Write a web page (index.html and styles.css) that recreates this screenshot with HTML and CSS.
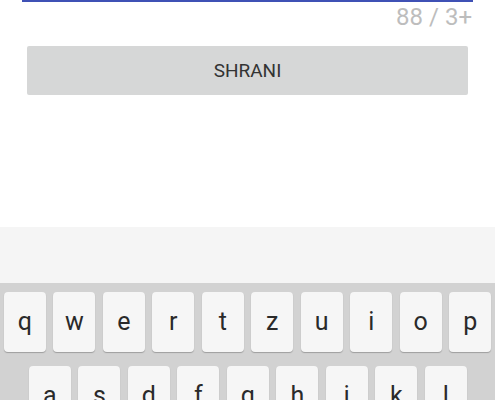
FILE: index.html
```html
<!DOCTYPE html>
<html>
<head>
<meta charset="utf-8">
<link rel="stylesheet" href="styles.css">
</head>
<body>
<div class="screen">
  <div class="underline"></div>
  <div class="counter">88 / 3+</div>
  <div class="btn">SHRANI</div>
  <div class="spacer"></div>
  <div class="suggest"></div>
  <div class="keyboard">
    <div class="row row1">
      <div class="key">q</div><div class="key">w</div><div class="key">e</div><div class="key">r</div><div class="key">t</div><div class="key">z</div><div class="key">u</div><div class="key">i</div><div class="key">o</div><div class="key">p</div>
    </div>
    <div class="row row2">
      <div class="key">a</div><div class="key">s</div><div class="key">d</div><div class="key">f</div><div class="key">g</div><div class="key">h</div><div class="key">j</div><div class="key">k</div><div class="key">l</div>
    </div>
  </div>
</div>
</body>
</html>
```

FILE: styles.css
```css
html, body {
  margin: 0;
  padding: 0;
  background: #ffffff;
}
.screen {
  width: 495px;
  height: 400px;
  overflow: hidden;
  display: flex;
  flex-direction: column;
  font-family: Roboto, "Liberation Sans", sans-serif;
}
.underline {
  height: 2px;
  margin: 0 22px;
  background: #3f51b5;
  flex: none;
}
.counter {
  flex: none;
  height: 44px;
  text-align: right;
  padding-right: 23px;
  font-size: 24px;
  line-height: 30px;
  color: #bdbdbd;
}
.btn {
  flex: none;
  margin: 0 27px;
  height: 49px;
  background: #d6d7d7;
  border-radius: 2px;
  display: flex;
  align-items: center;
  justify-content: center;
  font-size: 19px;
  color: #333333;
}
.spacer {
  flex: none;
  height: 132px;
}
.suggest {
  flex: none;
  height: 56px;
  background: #f5f5f5;
}
.keyboard {
  flex: 1;
  background: #d2d2d2;
  padding-top: 9px;
  display: flex;
  flex-direction: column;
  gap: 14px;
}
.row {
  display: flex;
  gap: 7.8px;
}
.row1 {
  padding-left: 4px;
}
.row2 {
  padding-left: 29px;
}
.key {
  flex: none;
  width: 41.7px;
  height: 60px;
  background: #f6f6f6;
  border-radius: 4px;
  box-shadow: 0 1px 1px rgba(0,0,0,0.25);
  display: flex;
  align-items: center;
  justify-content: center;
  font-size: 25px;
  color: #2a2a2a;
  padding-bottom: 2px;
  box-sizing: border-box;
}
```
